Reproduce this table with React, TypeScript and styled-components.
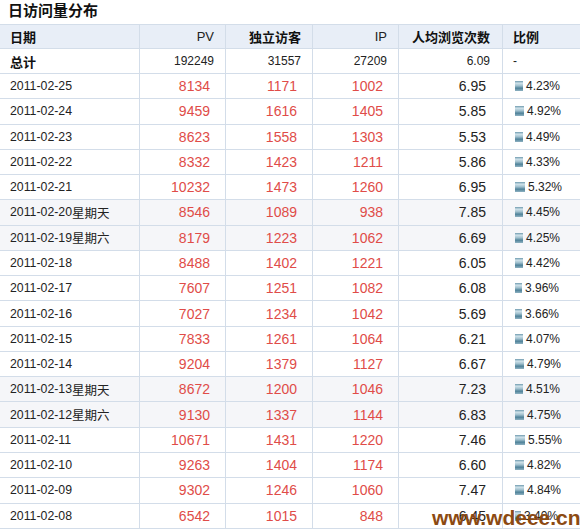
import React from "react";
import styled, { createGlobalStyle } from "styled-components";

const Global = createGlobalStyle`
  html, body { margin: 0; padding: 0; background: #fff; }
  body { font-family: "Liberation Sans", Arial, "Noto Sans CJK SC", sans-serif; color: #222; }
`;

const Page = styled.div`
  position: relative;
  width: 580px;
  height: 530px;
  overflow: hidden;
`;

const Title = styled.h2`
  margin: 0;
  height: 24px;
  padding-left: 8px;
  font-size: 15px;
  line-height: 20px;
  font-weight: bold;
  color: #111;
  font-family: "Noto Sans CJK SC", sans-serif;
`;

const COLS = "140px 86px 87px 86px 104px 1fr";

const HeadRow = styled.div`
  display: grid;
  grid-template-columns: ${COLS};
  height: 25px;
  box-sizing: border-box;
  border-top: 1px solid #d3dde9;
  border-bottom: 1px solid #d3dde9;
  background: #e8eef7;
`;

const Row = styled.div<{ $weekend?: boolean; $h: number }>`
  display: grid;
  grid-template-columns: ${COLS};
  height: ${(p) => p.$h}px;
  box-sizing: border-box;
  border-bottom: 1px solid #d3dde9;
  background: ${(p) => (p.$weekend ? "#f5f6f9" : "#fff")};
`;

const Cell = styled.div<{ $align?: "left" | "right"; $last?: boolean; $pr?: number }>`
  display: flex;
  align-items: center;
  justify-content: ${(p) => (p.$align === "right" ? "flex-end" : "flex-start")};
  padding: 0 ${(p) => p.$pr ?? 11}px 0 10px;
  border-right: ${(p) => (p.$last ? "none" : "1px solid #d3dde9")};
  white-space: nowrap;
  overflow: hidden;
`;

const HeadText = styled.span`
  font-family: "Noto Sans CJK SC", sans-serif;
  font-weight: bold;
  font-size: 13px;
  color: #111;
`;

const HeadLatin = styled.span`
  font-size: 13px;
  color: #222;
`;

const TotalNum = styled.span`
  font-size: 12px;
  color: #222;
`;

const DateText = styled.span`
  font-size: 12.3px;
  color: #222;
`;

const Weekday = styled.span`
  font-family: "Noto Sans CJK SC", sans-serif;
  font-size: 12.5px;
  color: #222;
`;

const RedNum = styled.span`
  font-size: 14px;
  color: #e04c48;
`;

const AvgNum = styled.span`
  font-size: 14px;
  color: #222;
`;

const Pct = styled.span`
  font-size: 12px;
  color: #222;
`;

const Bar = styled.span`
  display: inline-block;
  flex-shrink: 0;
  height: 10px;
  margin-right: 3px;
  margin-left: 2px;
  background: linear-gradient(
    to bottom,
    #6f9aae 0%,
    #cfe2ea 22%,
    #9fbfcd 48%,
    #4f8299 72%,
    #8fb2c2 100%
  );
`;

const Watermark = styled.div`
  position: absolute;
  left: 432px;
  top: 507px;
  font-family: "Liberation Sans", Arial, sans-serif;
  font-weight: bold;
  font-size: 21px;
  line-height: 1;
  color: #8c4a12;
`;

type D = [string, string, number, number, number, string, string];

const data: D[] = [
  ["2011-02-25", "", 8134, 1171, 1002, "6.95", "4.23"],
  ["2011-02-24", "", 9459, 1616, 1405, "5.85", "4.92"],
  ["2011-02-23", "", 8623, 1558, 1303, "5.53", "4.49"],
  ["2011-02-22", "", 8332, 1423, 1211, "5.86", "4.33"],
  ["2011-02-21", "", 10232, 1473, 1260, "6.95", "5.32"],
  ["2011-02-20", "星期天", 8546, 1089, 938, "7.85", "4.45"],
  ["2011-02-19", "星期六", 8179, 1223, 1062, "6.69", "4.25"],
  ["2011-02-18", "", 8488, 1402, 1221, "6.05", "4.42"],
  ["2011-02-17", "", 7607, 1251, 1082, "6.08", "3.96"],
  ["2011-02-16", "", 7027, 1234, 1042, "5.69", "3.66"],
  ["2011-02-15", "", 7833, 1261, 1064, "6.21", "4.07"],
  ["2011-02-14", "", 9204, 1379, 1127, "6.67", "4.79"],
  ["2011-02-13", "星期天", 8672, 1200, 1046, "7.23", "4.51"],
  ["2011-02-12", "星期六", 9130, 1337, 1144, "6.83", "4.75"],
  ["2011-02-11", "", 10671, 1431, 1220, "7.46", "5.55"],
  ["2011-02-10", "", 9263, 1404, 1174, "6.60", "4.82"],
  ["2011-02-09", "", 9302, 1246, 1060, "7.47", "4.84"],
  ["2011-02-08", "", 6542, 1015, 848, "6.45", "3.40"],
];

export default function App() {
  return (
    <Page>
      <Global />
      <Title>日访问量分布</Title>
      <HeadRow>
        <Cell><HeadText>日期</HeadText></Cell>
        <Cell $align="right"><HeadLatin>PV</HeadLatin></Cell>
        <Cell $align="right"><HeadText>独立访客</HeadText></Cell>
        <Cell $align="right"><HeadLatin>IP</HeadLatin></Cell>
        <Cell $align="right" $pr={12}><HeadText>人均浏览次数</HeadText></Cell>
        <Cell $last><HeadText>比例</HeadText></Cell>
      </HeadRow>
      <Row $h={25}>
        <Cell><HeadText>总计</HeadText></Cell>
        <Cell $align="right"><TotalNum>192249</TotalNum></Cell>
        <Cell $align="right"><TotalNum>31557</TotalNum></Cell>
        <Cell $align="right"><TotalNum>27209</TotalNum></Cell>
        <Cell $align="right" $pr={12}><TotalNum>6.09</TotalNum></Cell>
        <Cell $last><TotalNum>-</TotalNum></Cell>
      </Row>
      {data.map(([date, wd, pv, uv, ip, avg, pct]) => (
        <Row key={date} $h={25.28} $weekend={!!wd}>
          <Cell>
            <DateText>{date}</DateText>
            {wd && <Weekday>{wd}</Weekday>}
          </Cell>
          <Cell $align="right" $pr={15}><RedNum>{pv}</RedNum></Cell>
          <Cell $align="right" $pr={15}><RedNum>{uv}</RedNum></Cell>
          <Cell $align="right" $pr={15}><RedNum>{ip}</RedNum></Cell>
          <Cell $align="right" $pr={16}><AvgNum>{avg}</AvgNum></Cell>
          <Cell $last>
            <Bar style={{ width: Math.round(parseFloat(pct) * 1.85) }} />
            <Pct>{pct}%</Pct>
          </Cell>
        </Row>
      ))}
      <Watermark>www.wdeee.cn</Watermark>
    </Page>
  );
}
